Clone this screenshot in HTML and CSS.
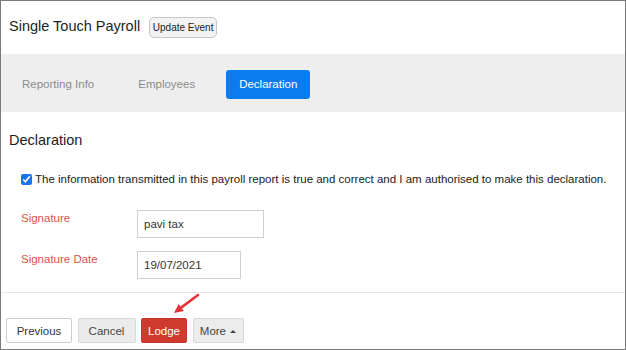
FILE: index.html
```html
<!DOCTYPE html>
<html>
<head>
<meta charset="utf-8">
<title>Single Touch Payroll</title>
<link rel="stylesheet" href="styles.css">
</head>
<body>
<div class="frame">
  <header class="page-head">
    <h1 class="title">Single Touch Payroll</h1>
    <button class="btn-event">Update Event</button>
  </header>
  <nav class="tabs">
    <span class="tab">Reporting Info</span>
    <span class="tab">Employees</span>
    <span class="tab active">Declaration</span>
  </nav>
  <main class="content">
    <h2 class="section-title">Declaration</h2>
    <label class="agree"><input class="check" type="checkbox" checked><span>The information transmitted in this payroll report is true and correct and I am authorised to make this declaration.</span></label>
    <div class="field">
      <span class="field-label">Signature</span>
      <input class="input input-sig" type="text" value="pavi tax">
    </div>
    <div class="field field-date">
      <span class="field-label">Signature Date</span>
      <input class="input input-date" type="text" value="19/07/2021">
    </div>
  </main>
  <footer class="actions">
    <button class="btn btn-prev">Previous</button>
    <button class="btn btn-cancel">Cancel</button>
    <button class="btn btn-lodge">Lodge</button>
    <button class="btn btn-more">More <span class="caret"></span></button>
  </footer>
  <svg class="arrow" width="40" height="32" viewBox="0 0 40 32">
    <line x1="32" y1="8" x2="15.2" y2="20.6" stroke="#e8323a" stroke-width="2.6" stroke-linecap="round"/>
    <polygon points="8,26 17.8,24 12.6,17" fill="#e8323a"/>
  </svg>
</div>
</body>
</html>
```
FILE: styles.css
```css
html, body {
  margin: 0;
  padding: 0;
  background: #fff;
}
body {
  font-family: "Liberation Sans", Arial, sans-serif;
  color: #222;
}
.frame {
  width: 626px;
  height: 350px;
  box-sizing: border-box;
  border: 1px solid #7a7a7a;
  position: relative;
  overflow: hidden;
  background: #fff;
}
.page-head {
  height: 53px;
  box-sizing: border-box;
  display: flex;
  align-items: center;
  gap: 9px;
  padding: 0 0 3px 8px;
}
.title {
  margin: 0;
  font-size: 14.5px;
  font-weight: normal;
  color: #1e1e1e;
}
.btn-event {
  font-family: "Liberation Sans", Arial, sans-serif;
  font-size: 10px;
  color: #222;
  width: 68px;
  height: 21px;
  padding: 0;
  margin-top: 3px;
  border: 1px solid #c6c6c6;
  border-radius: 5px;
  background: #f3f3f3;
}
.tabs {
  height: 58px;
  box-sizing: border-box;
  background: #eeeeee;
  display: flex;
  align-items: center;
  gap: 18px;
  padding: 3px 0 0 8px;
}
.tab {
  height: 29px;
  line-height: 29px;
  padding: 0 13px;
  font-size: 11.5px;
  color: #8c8c8c;
  border-radius: 3px;
}
.tab.active {
  background: #0b7cf0;
  color: #fff;
}
.content {
  padding: 0 8px;
}
.section-title {
  margin: 0;
  padding-top: 20px;
  font-size: 14.5px;
  line-height: 17px;
  font-weight: normal;
  color: #1e1e1e;
}
.agree {
  display: flex;
  align-items: center;
  gap: 3px;
  margin-top: 23px;
  padding-left: 12px;
  font-size: 11.5px;
  line-height: 14px;
  color: #222;
}
.check {
  width: 11px;
  height: 11px;
  margin: 0;
  accent-color: #1a73e8;
}
.field {
  display: flex;
  align-items: flex-start;
  margin-top: 24px;
  padding-left: 12px;
}
.field-date {
  margin-top: 13px;
}
.field-label {
  width: 116px;
  padding-top: 1px;
  font-size: 11.5px;
  line-height: 14px;
  color: #d9534f;
}
.input {
  height: 28px;
  box-sizing: border-box;
  border: 1px solid #cfcfcf;
  padding: 0 6px;
  font-family: "Liberation Sans", Arial, sans-serif;
  font-size: 11.5px;
  color: #333;
  background: #fff;
  outline: none;
}
.input-sig {
  width: 127px;
}
.input-date {
  width: 104px;
}
.actions {
  margin-top: 13px;
  border-top: 1px solid #e6e6e6;
  padding: 25px 0 0 5px;
  display: flex;
  gap: 5.5px;
}
.btn {
  height: 25px;
  padding: 0;
  font-family: "Liberation Sans", Arial, sans-serif;
  font-size: 11.5px;
  color: #333;
  border: 1px solid #cccccc;
  border-radius: 2px;
  background: #fff;
}
.btn-prev {
  width: 66px;
}
.btn-cancel {
  width: 58px;
  background: #ebebeb;
  border-color: #d8d8d8;
  color: #444;
}
.btn-lodge {
  width: 46px;
  background: #cf3a2e;
  border-color: #c0332a;
  color: #fff;
}
.btn-more {
  width: 51px;
  background: #ececec;
  border-color: #d8d8d8;
  color: #444;
}
.caret {
  display: inline-block;
  width: 0;
  height: 0;
  border-left: 3px solid transparent;
  border-right: 3px solid transparent;
  border-bottom: 3px solid #444;
  vertical-align: 2px;
  margin-left: 1px;
}
.arrow {
  position: absolute;
  left: 165px;
  top: 286px;
}
```
